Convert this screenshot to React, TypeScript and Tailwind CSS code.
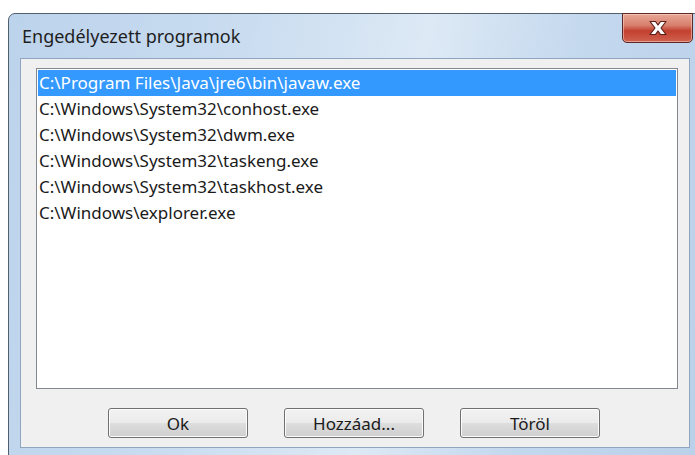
import React from 'react';

const programs = [
  'C:\\Program Files\\Java\\jre6\\bin\\javaw.exe',
  'C:\\Windows\\System32\\conhost.exe',
  'C:\\Windows\\System32\\dwm.exe',
  'C:\\Windows\\System32\\taskeng.exe',
  'C:\\Windows\\System32\\taskhost.exe',
  'C:\\Windows\\explorer.exe',
];

function CloseGlyph() {
  return (
    <svg width="22" height="16" viewBox="0 0 22 16">
      <path
        d="M3 1.5 H8.5 L11 5 L13.5 1.5 H19 L14 8 L19 14.5 H13.5 L11 11 L8.5 14.5 H3 L8 8 Z"
        fill="#ffffff"
        stroke="#5c1f17"
        strokeWidth="1.2"
        strokeLinejoin="round"
      />
    </svg>
  );
}

function Button({ label }: { label: string }) {
  return (
    <button
      type="button"
      className="w-[140px] h-[30px] rounded-[3px] border border-[#707070] text-[17px] leading-none text-[#1a1a1a] bg-[linear-gradient(to_bottom,#f2f2f2_0%,#ebebeb_48%,#dddddd_52%,#cfcfcf_100%)] shadow-[inset_0_0_0_1px_#fcfcfc]"
    >
      {label}
    </button>
  );
}

export default function App() {
  return (
    <div
      className="w-[695px] h-[455px] bg-white overflow-hidden"
      style={{ fontFamily: '"Segoe UI", "Noto Sans", sans-serif' }}
    >
      <div className="relative ml-[8px] mt-[13px] w-[694px] h-[446px] rounded-t-[7px] border border-[#52606e] bg-[linear-gradient(100deg,#bcd3ec_0%,#c9dcf0_30%,#dde9f5_55%,#c4d8ee_75%,#bad1ea_100%)] pl-[11px]">
        {/* title bar */}
        <div className="h-[44px] flex items-center pl-[2px] text-[18px] text-[#1e1e1e]">
          Engedélyezett programok
        </div>

        {/* close button */}
        <div className="absolute left-[613px] top-[-1px] w-[71px] h-[30px] rounded-b-[5px] border border-[#5b2a26] bg-[linear-gradient(to_bottom,#e8a696_0%,#d8806e_40%,#c2402f_60%,#d0624f_100%)] flex items-center justify-center shadow-[inset_0_0_0_1px_rgba(255,220,210,0.5)]">
          <CloseGlyph />
        </div>

        {/* client area */}
        <div className="w-[670px] h-[390px] bg-[#f0f0f0] border border-[#8fa4bf] flex flex-col">
          <div className="ml-[15px] mt-[9px] w-[642px] h-[321px] bg-white border border-[#828790] p-[1px]">
            {programs.map((p, i) => (
              <div
                key={p}
                className={
                  i === 0
                    ? 'h-[26px] flex items-center pl-[1px] text-[17px] bg-[#3399ff] text-white'
                    : 'h-[26px] flex items-center pl-[1px] text-[17px] text-[#1a1a1a]'
                }
              >
                {p}
              </div>
            ))}
          </div>
          <div className="flex justify-center gap-[36px] mt-[19px] pr-[2px]">
            <Button label="Ok" />
            <Button label="Hozzáad..." />
            <Button label="Töröl" />
          </div>
        </div>
      </div>
    </div>
  );
}
